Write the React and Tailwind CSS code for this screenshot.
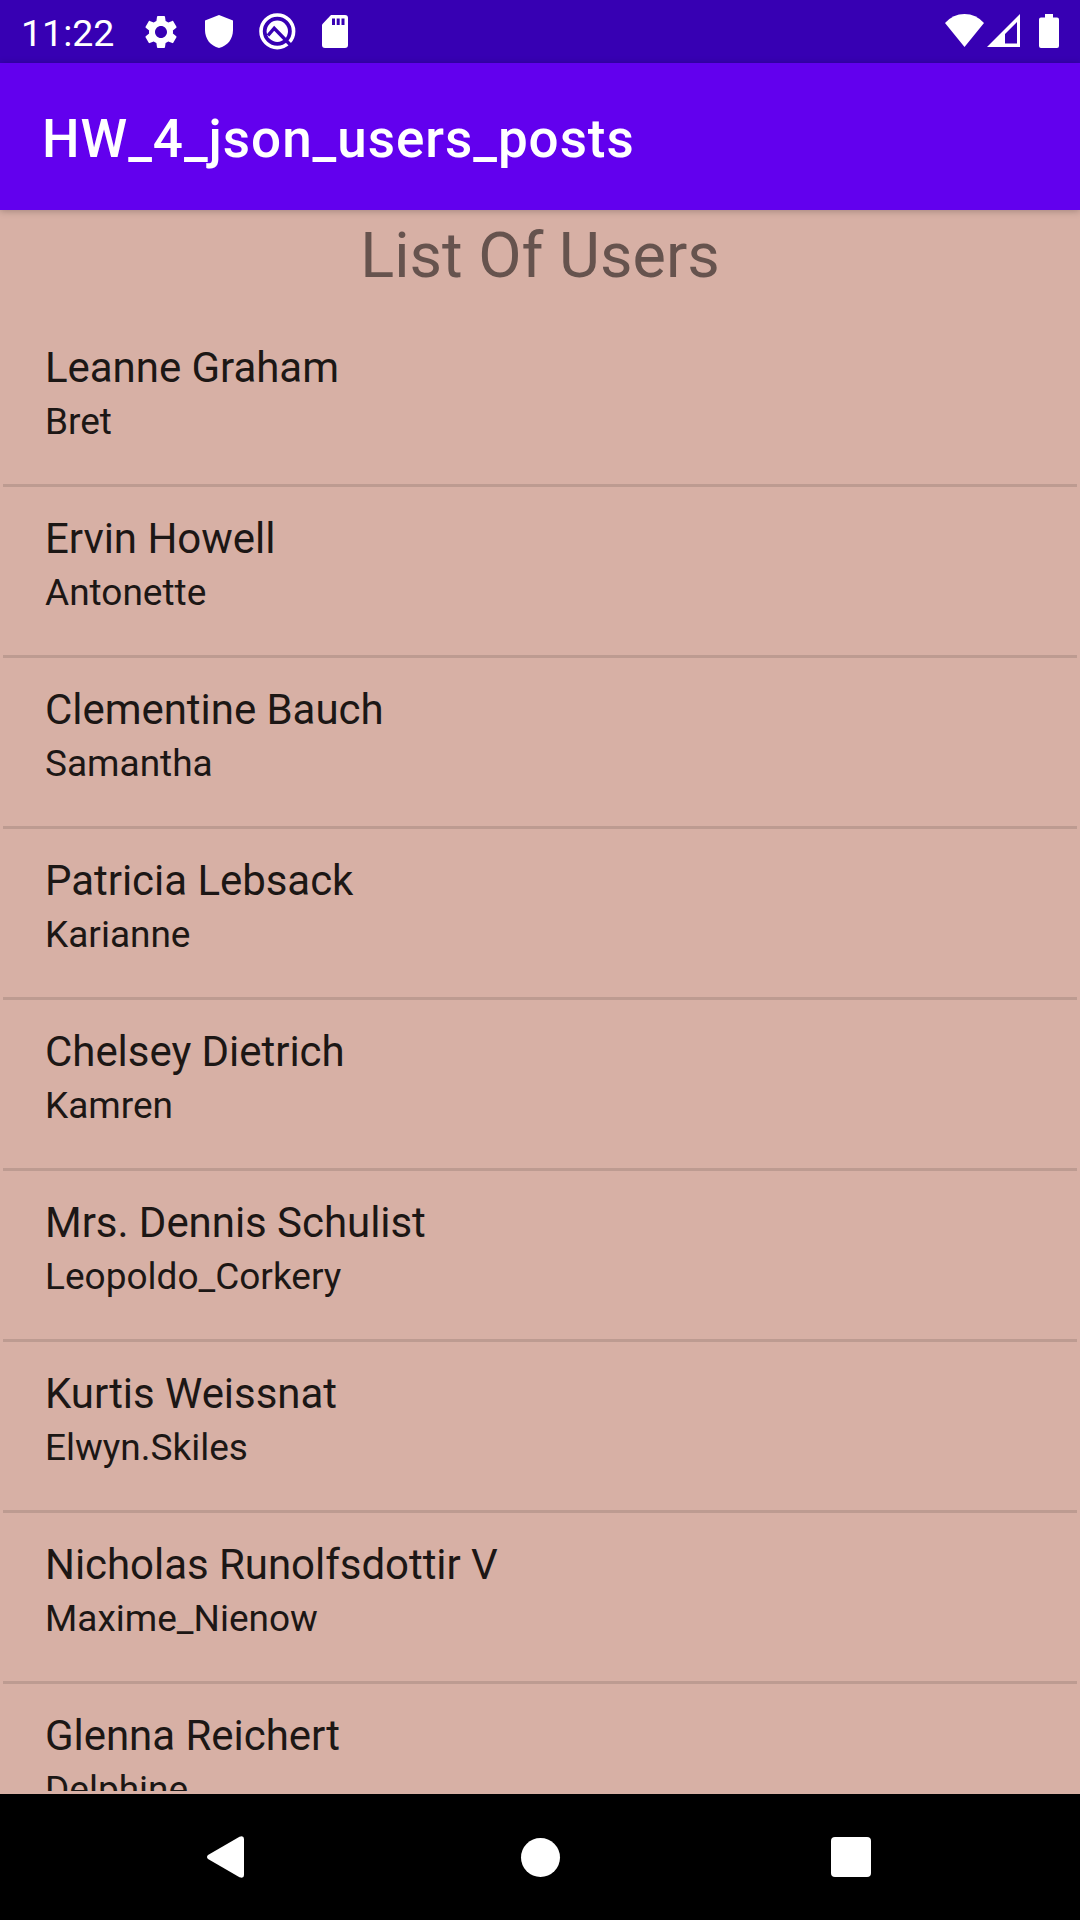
const users = [
  ["Leanne Graham", "Bret"],
  ["Ervin Howell", "Antonette"],
  ["Clementine Bauch", "Samantha"],
  ["Patricia Lebsack", "Karianne"],
  ["Chelsey Dietrich", "Kamren"],
  ["Mrs. Dennis Schulist", "Leopoldo_Corkery"],
  ["Kurtis Weissnat", "Elwyn.Skiles"],
  ["Nicholas Runolfsdottir V", "Maxime_Nienow"],
  ["Glenna Reichert", "Delphine"],
];

function StatusBar() {
  return (
    <div className="flex h-[63px] shrink-0 items-start bg-[#3700b3] text-white">
      <span className="ml-[21px] mt-[12px] w-[120px] text-[37.5px] leading-[42px]">11:22</span>
      <svg className="mt-[12px] h-[40px] w-[40px]" viewBox="0 0 24 24" fill="currentColor">
        <path d="M19.14 12.94c.04-.3.06-.61.06-.94 0-.32-.02-.64-.07-.94l2.03-1.58c.18-.14.23-.41.12-.61l-1.92-3.32c-.12-.22-.37-.29-.59-.22l-2.39.96c-.5-.38-1.03-.7-1.62-.94l-.36-2.54c-.04-.24-.24-.41-.48-.41h-3.84c-.24 0-.43.17-.47.41l-.36 2.54c-.59.24-1.13.57-1.62.94l-2.39-.96c-.22-.08-.47 0-.59.22L2.74 8.87c-.12.21-.08.47.12.61l2.03 1.58c-.05.3-.09.63-.09.94s.02.64.07.94l-2.03 1.58c-.18.14-.23.41-.12.61l1.92 3.32c.12.22.37.29.59.22l2.39-.96c.5.38 1.03.7 1.62.94l.36 2.54c.05.24.24.41.48.41h3.84c.24 0 .44-.17.47-.41l.36-2.54c.59-.24 1.13-.56 1.62-.94l2.39.96c.22.08.47 0 .59-.22l1.92-3.32c.12-.22.07-.47-.12-.61l-2.01-1.58zM12 15.6c-1.98 0-3.6-1.62-3.6-3.6s1.62-3.6 3.6-3.6 3.6 1.62 3.6 3.6-1.62 3.6-3.6 3.6z" />
      </svg>
      <svg className="ml-[24px] mt-[15px] h-[33px] w-[28px]" viewBox="0 0 28 33" fill="currentColor">
        <path d="M14 0L28 5.5V15C28 24 22.5 31 14 33C5.5 31 0 24 0 15V5.5Z" />
      </svg>
      <svg className="ml-[26px] mt-[13px] h-[37px] w-[37px]" viewBox="0 0 37 37" fill="none">
        <circle cx="18.3" cy="18.3" r="16.3" stroke="currentColor" strokeWidth="3.6" />
        <circle cx="18.3" cy="18.3" r="10.7" fill="currentColor" />
        <path d="M9 22.500L15.200 15.200L31.500 32" stroke="#3700b3" strokeWidth="3.4" />
      </svg>
      <svg className="ml-[26px] mt-[15px] h-[33px] w-[26px]" viewBox="0 0 26 33">
        <path d="M9 0H23Q26 0 26 3V30Q26 33 23 33H3Q0 33 0 30V9.5Z" fill="currentColor" />
        <path d="M10 3.5h3v6.5h-3zM14.7 3.5h3v6.5h-3zM19.5 3.5h3v6.5h-3z" fill="#3700b3" />
      </svg>
      <svg className="ml-auto mt-[14px] h-[33px] w-[39px]" viewBox="0 0 39 33" fill="currentColor">
        <path d="M0 9Q8 0 19.5 0T39 9L19.5 33Z" />
      </svg>
      <svg className="ml-[3px] mt-[14px] h-[33px] w-[33px]" viewBox="0 0 33 33">
        <path fillRule="evenodd" d="M33 0V33H0ZM30 8L18 20V29.5H30Z" fill="currentColor" />
      </svg>
      <svg className="ml-[19px] mr-[21px] mt-[14px] h-[34px] w-[20px]" viewBox="0 0 20 34" fill="currentColor">
        <path d="M6 0H14V3.5H18Q20 3.5 20 5.5V32Q20 34 18 34H2Q0 34 0 32V5.5Q0 3.5 2 3.5H6Z" />
      </svg>
    </div>
  );
}

function NavBar() {
  return (
    <div className="flex h-[126px] shrink-0 items-start bg-black text-white">
      <svg className="ml-[207px] mt-[42px] h-[42px] w-[37px]" viewBox="0 0 37 43" preserveAspectRatio="none" fill="currentColor">
        <path d="M1 19.5L32.5.8Q37 -.8 37 3V40Q37 43.8 32.5 42.2L1 23.5Q-1 21.5 1 19.5Z" />
      </svg>
      <div className="ml-[276.5px] mt-[43.5px] h-[39px] w-[39px] rounded-full bg-white" />
      <div className="ml-[271.5px] mt-[43px] h-[40px] w-[40px] rounded-[4px] bg-white" />
    </div>
  );
}

export default function App() {
  return (
    <div className="flex h-[1920px] w-[1080px] flex-col overflow-hidden bg-[#d7b0a5] font-['Roboto',sans-serif]">
      <StatusBar />
      <header className="z-10 h-[147px] shrink-0 bg-[#6200ee] pl-[42px] pt-[45px] shadow-[0_1px_7px_rgba(0,0,0,0.25)]">
        <h1 className="text-[53px] font-medium leading-[62px] tracking-[0.018em] text-white">HW_4_json_users_posts</h1>
      </header>
      <main className="flex min-h-0 flex-1 flex-col px-[3px] pb-[3px] pt-[9px]">
        <h2 className="mb-[23px] text-center text-[63px] leading-[74px] text-[#66534e]">List Of Users</h2>
        <ul className="min-h-0 flex-1 overflow-hidden text-[#1c1715]">
          {users.map(([name, username]) => (
            <li key={username} className="h-[171px] border-b-[3px] border-[#bd9b91] pl-[42px] pt-[27px]">
              <p className="text-[42px] leading-[50px] tracking-[-0.001em]">{name}</p>
              <p className="mt-[7px] text-[37px] leading-[44px]">{username}</p>
            </li>
          ))}
        </ul>
      </main>
      <NavBar />
    </div>
  );
}
